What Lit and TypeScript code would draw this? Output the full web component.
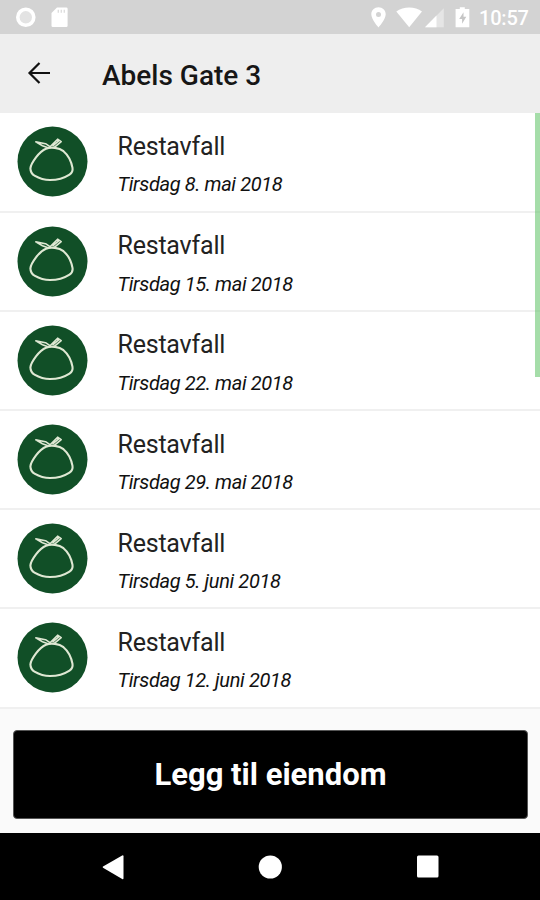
import { LitElement, html, css, svg } from "lit";
import { customElement, property } from "lit/decorators.js";

@customElement("status-bar")
export class StatusBar extends LitElement {
  static styles = css`
    :host {
      display: flex;
      height: 34px;
      background: #d3d3d3;
    }
    svg {
      display: block;
      flex: none;
    }
    .time {
      font: 500 20px/37px Roboto, sans-serif;
      color: #fff;
      letter-spacing: -0.2px;
      margin-left: -61px;
      white-space: nowrap;
    }
  `;
  render() {
    return html`
      <svg width="540" height="34" viewBox="0 0 540 34">
        <circle cx="25.8" cy="17.3" r="8" fill="#e3e3e3" stroke="#fff" stroke-width="3.6" />
        <path d="M57 7.5h9.3a1.3 1.3 0 0 1 1.3 1.3v17a1.3 1.3 0 0 1-1.3 1.3H52.8a1.3 1.3 0 0 1-1.3-1.3V13z" fill="#fff" />
        <path d="M58.3 9.8v3M61.3 9.8v3M64.3 9.8v3" stroke="#dedede" stroke-width="1.4" />
        <path fill-rule="evenodd" d="M378.5 7.3c-4 0-7.2 3.1-7.2 7 0 5.2 7.2 13.2 7.2 13.2s7.2-8 7.2-13.2c0-3.9-3.2-7-7.2-7zm0 4.7a2.5 2.5 0 1 1 0 5 2.5 2.5 0 0 1 0-5z" fill="#fff" />
        <path d="M396.3 11.6C403.5 6 415 6 422 11.600L409.2 27.3z" fill="#fff" />
        <path d="M443.8 8.3v18.9H425z" fill="#e5e5e5" />
        <path d="M436.5 15.6v11.6H425z" fill="#fff" />
        <path d="M459.8 7.2h5v1.9h4.5v18.2h-13.7V9.1h4.2z" fill="#fff" />
        <path d="M463.5 12.3l-4.3 6.7h2.9v4.8l4.2-7h-2.8z" fill="#c6c6c6" />
      </svg>
      <span class="time">10:57</span>
    `;
  }
}

@customElement("waste-row")
export class WasteRow extends LitElement {
  @property() name = "";
  @property() date = "";
  static styles = css`
    :host {
      display: flex;
      box-sizing: border-box;
      height: 99.17px;
      padding-left: 17px;
      border-bottom: 2px solid #f0f0f0;
      font-family: Roboto, sans-serif;
    }
    svg {
      display: block;
      flex: none;
      margin-top: 12.8px;
    }
    .text {
      margin-left: 29.5px;
      padding-top: 17.5px;
    }
    .name {
      font-size: 25px;
      line-height: 32px;
      letter-spacing: -0.22px;
      color: #222;
    }
    .date {
      margin-top: 8.4px;
      font-size: 20px;
      line-height: 26px;
      letter-spacing: -0.37px;
      font-style: italic;
      color: #111;
      white-space: nowrap;
    }
  `;
  render() {
    const bag = svg`
      <path d="M29 22.3C25 23.8 22 27 19 31C16 35 13.5 38.5 13.4 42C13.5 45.5 14.8 47.8 17.5 49.2C22 51.8 27 53.6 33 53.6C40 53.6 47 51.8 52.5 48.2C55 46.5 56 44.5 55.5 41.5C54.5 36 51.5 29 46.5 24.8C42 21.3 34 20.3 29 22.3Z" />
      <path stroke-width="1.6" d="M31 21.3L25.5 19.3L18.8 15.5L28.5 17.3L33 20.3L40.6 12.8L44.2 15.2L37 21.3M35.5 19.8L42 14.2" />
    `;
    return html`
      <svg width="71" height="71" viewBox="0 0 71 71" fill="none" stroke="#dfe8d3" stroke-width="2.1" stroke-linejoin="round">
        <circle cx="35.5" cy="35.5" r="35" fill="#114f27" stroke="none" />
        <g transform="translate(0 0.4)">${bag}</g>
      </svg>
      <div class="text">
        <div class="name">${this.name}</div>
        <div class="date">${this.date}</div>
      </div>
    `;
  }
}

@customElement("app-root")
export class AppRoot extends LitElement {
  static styles = css`
    :host {
      display: flex;
      flex-direction: column;
      width: 540px;
      height: 900px;
      overflow: hidden;
      background: #fafafa;
      font-family: Roboto, sans-serif;
    }
    svg {
      display: block;
    }
    .header {
      display: flex;
      height: 79px;
      background: #eee;
    }
    .back {
      margin: 27px 0 0 26px;
    }
    .title {
      margin-left: 50px;
      font-size: 28px;
      line-height: 84px;
      font-weight: 500;
      color: #161616;
      white-space: nowrap;
    }
    .list {
      position: relative;
      box-sizing: border-box;
      height: 596px;
      padding-top: 0.6px;
      background: #fff;
      flex: none;
    }
    .scroll {
      position: absolute;
      top: 0;
      right: 0;
      width: 5px;
      height: 264px;
      background: rgba(76, 187, 84, 0.5);
    }
    .footer {
      height: 124px;
      box-sizing: border-box;
      padding: 21px 12px 0 13px;
    }
    .add {
      display: block;
      width: 100%;
      height: 89px;
      padding: 0;
      border: 1px solid #555;
      border-radius: 4px;
      background: #000;
      color: #fff;
      font: 700 31px/88px Roboto, sans-serif;
    }
    .nav {
      flex: 1;
      background: #000;
    }
  `;
  private dates = ["8. mai", "15. mai", "22. mai", "29. mai", "5. juni", "12. juni"];
  render() {
    return html`
      <status-bar></status-bar>
      <div class="header">
        <svg class="back" width="26" height="24" viewBox="0 0 26 24" fill="none" stroke="#111" stroke-width="2.2">
          <path d="M24 12H3.5M13.5 2L3.5 12L13.5 22" />
        </svg>
        <div class="title">Abels Gate 3</div>
      </div>
      <div class="list">
        ${this.dates.map((d) => html`<waste-row name="Restavfall" date=${`Tirsdag ${d} 2018`}></waste-row>`)}
        <div class="scroll"></div>
      </div>
      <div class="footer"><button class="add">Legg til eiendom</button></div>
      <div class="nav">
        <svg width="540" height="67" viewBox="0 0 540 67" fill="#fff">
          <path d="M122.2 22.5q1.3-.6 1.3.8v22q0 1.4-1.3.8L103 34.8q-.8-.6 0-1.2z" />
          <circle cx="270.3" cy="34" r="11.6" />
          <rect x="417" y="22.6" width="21.5" height="22" rx="1.5" />
        </svg>
      </div>
    `;
  }
}
